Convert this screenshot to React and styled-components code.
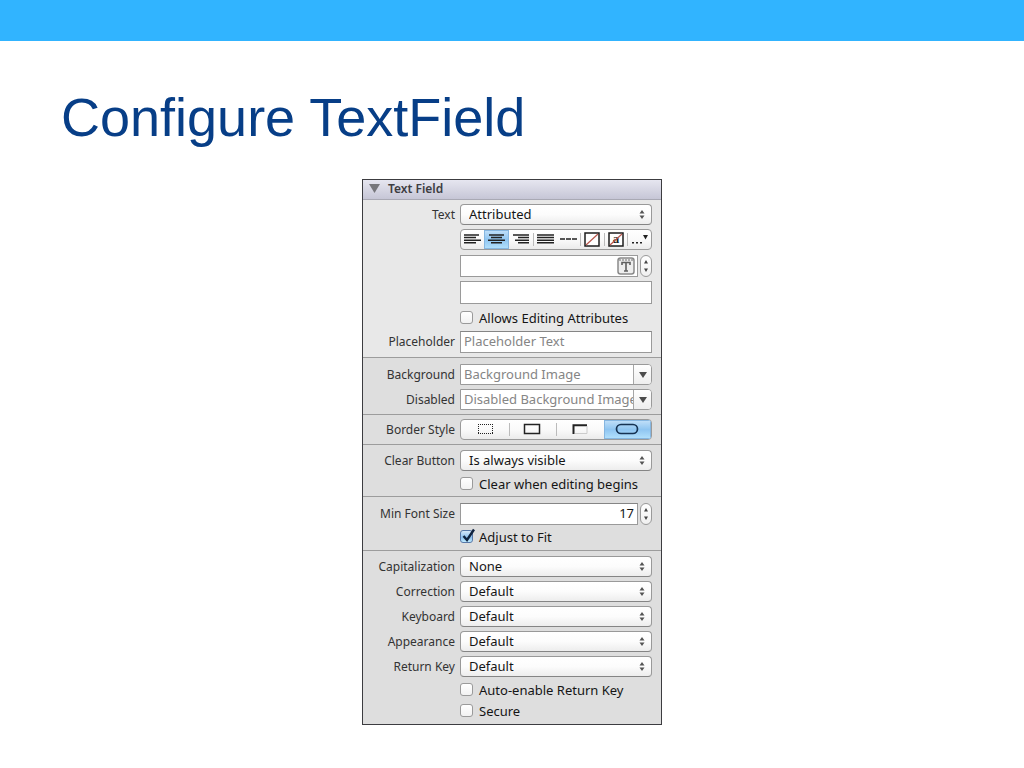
import React from "react";
import styled, { createGlobalStyle, css } from "styled-components";

const GlobalStyle = createGlobalStyle`
  * { box-sizing: border-box; }
  body { margin: 0; background: #fff; }
  button, input, select, textarea { font: inherit; margin: 0; }
`;

const Slide = styled.div`
  display: flex;
  flex-direction: column;
  font-family: "Noto Sans", "Open Sans", sans-serif;
`;

const Banner = styled.div`
  height: 41px;
  background: #31b4ff;
`;

const Title = styled.h1`
  margin: 0;
  padding: 46px 61px 32px;
  font: 400 54px/60px "Liberation Sans", sans-serif;
  color: #073e87;
`;

const Panel = styled.form`
  width: 300px;
  margin: 0 auto;
  border: 1px solid #3c3c40;
  background: #dedede;
  font-size: 13px;
  line-height: 18px;
  color: #151515;
`;

const PanelHeader = styled.h2`
  display: flex;
  align-items: center;
  gap: 8px;
  height: 20px;
  margin: 0;
  padding: 0 6px 2px;
  border-bottom: 1px solid #a9a9b4;
  background: linear-gradient(#e6e6f0, #c6c6d6);
  font-size: 12px;
  line-height: 16px;
  font-weight: 600;
  color: #3d3d42;
`;

const Section = styled.section`
  padding: ${(p) => p.$pad || "3px 0"};
  background: ${(p) => (p.$light ? "#e8e8e8" : "#dedede")};
  & + & { border-top: 1px solid #9c9c9c; }
`;

const rowHeights = { tall: 27, normal: 25, medium: 23, short: 21 };

const Row = styled.div`
  display: grid;
  grid-template-columns: 92px 192px;
  column-gap: 5px;
  align-items: center;
  height: ${(p) => rowHeights[p.$size || "normal"]}px;
`;

const Label = styled.label`
  text-align: right;
  white-space: nowrap;
  font-size: 12px;
  color: #333;
`;

const Control = styled.div`
  grid-column: 2;
  display: flex;
  align-items: center;
  gap: ${(p) => p.$gap || 0}px;
`;

const box = css`
  border: 1px solid #9a9a9a;
  background: #fff;
`;

const PopupWrap = styled.div`
  position: relative;
  width: 100%;
  height: 21px;
  svg {
    position: absolute;
    right: 7px;
    top: 6px;
    pointer-events: none;
  }
`;

const Popup = styled.select`
  ${box}
  display: block;
  appearance: none;
  width: 100%;
  height: 21px;
  padding: 0 8px 2px;
  border-radius: 4px;
  border-color: #999 #999 #858585;
  background: linear-gradient(#fff, #fcfcfc 50%, #ededed);
  color: inherit;
  line-height: 18px;
`;

const Field = styled.input`
  ${box}
  flex: 1;
  min-width: 0;
  width: 100%;
  height: 22px;
  padding: 0 3px 2px;
  border-top-color: #858585;
  color: inherit;
  text-align: ${(p) => (p.$right ? "right" : "left")};
  &::placeholder { color: #858585; opacity: 1; }
`;

const FontField = styled.div`
  ${box}
  flex: 1;
  min-width: 0;
  display: flex;
  align-items: center;
  height: 22px;
  padding-right: 2px;
`;

const BareInput = styled.input`
  flex: 1;
  min-width: 0;
  border: 0;
  padding: 0 4px;
  background: none;
`;

const IconButton = styled.button`
  display: flex;
  padding: 0;
  border: 0;
  background: none;
`;

const TextArea = styled.textarea`
  ${box}
  display: block;
  width: 100%;
  height: 23px;
  padding: 1px 4px;
  resize: none;
  overflow: hidden;
`;

const StepperButton = styled.button`
  ${box}
  flex: none;
  display: flex;
  align-items: center;
  justify-content: center;
  width: 12px;
  height: 22px;
  padding: 0;
  border-radius: 6px;
  background: linear-gradient(#fff, #f0f0f0);
`;

const Combo = styled.div`
  ${box}
  display: flex;
  width: 100%;
  height: 21px;
  border-radius: 0 4px 4px 0;
  overflow: hidden;
`;

const ComboInput = styled(BareInput)`
  padding: 0 0 2px 3px;
  &::placeholder { color: #858585; opacity: 1; }
`;

const ComboButton = styled.button`
  display: flex;
  align-items: center;
  justify-content: center;
  width: 18px;
  padding: 0;
  border: 0;
  border-left: 1px solid #a6a6a6;
  background: linear-gradient(#fff, #eee);
`;

const Segments = styled.div`
  ${box}
  display: grid;
  grid-template-columns: ${(p) => p.$columns};
  width: 100%;
  height: 21px;
  border-radius: 4px;
  background: linear-gradient(#fff, #fafafa 50%, #ebebeb);
  overflow: hidden;
`;

const Segment = styled.button`
  display: flex;
  align-items: center;
  justify-content: center;
  padding: 0 0 1px;
  border: 0;
  background: ${(p) => (p.$on ? "linear-gradient(#c4e1f9, #8fc5f1 50%, #b4e2fd)" : "none")};
  ${(p) => p.$on && "box-shadow: inset 0 0 0 1px #86b6e0;"}
  ${(p) => p.$rule && "background: linear-gradient(#bbb, #bbb) 0 50% / 1px 13px no-repeat;"}
`;

const CheckLabel = styled.label`
  display: flex;
  align-items: center;
  gap: 6px;
  position: relative;
  white-space: nowrap;
  svg {
    position: absolute;
    left: 1px;
    top: 0;
    pointer-events: none;
    display: none;
  }
  input:checked + svg { display: block; }
`;

const CheckInput = styled.input`
  ${box}
  appearance: none;
  width: 13px;
  height: 13px;
  border-radius: 3px;
  background: linear-gradient(#fff, #f2f2f2);
  &:checked {
    border-color: #5778a8;
    background: linear-gradient(#d5e8fa, #8cc0f0 60%, #c0ecff);
  }
`;

const UpDown = () => (
  <svg width="6" height="9" viewBox="0 0 6 9" fill="#555" aria-hidden="true">
    <path d="M3 0 5.5 3.4H.5zM3 9 .5 5.6h5z" />
  </svg>
);

const StepArrows = () => (
  <svg width="6" height="14" viewBox="0 0 6 14" fill="#444" aria-hidden="true">
    <path d="M3 1 5 4.4H1zM3 13 1 9.6h4z" />
  </svg>
);

const Down = ({ w = 8, h = 6, fill = "#4c4c4c" }) => (
  <svg width={w} height={h} viewBox="0 0 9 7" preserveAspectRatio="none" fill={fill} aria-hidden="true">
    <path d="M0 0h9L4.500 7z" />
  </svg>
);

const Lines = ({ rows }) => (
  <svg width="17" height="10" viewBox="0 0 17 10" stroke="#222" strokeWidth="1.5" aria-hidden="true">
    {rows.map(([a, b], i) => (
      <path key={i} d={`M${a} ${1 + i * 2.6}H${b}`} />
    ))}
  </svg>
);

const alignments = [
  ["Align left", [[0, 15], [0, 12], [0, 17], [0, 12]]],
  ["Align center", [[1, 16], [3, 14], [0, 17], [3, 14]]],
  ["Align right", [[0, 16], [5, 16], [2, 16], [5, 16]]],
  ["Justify", [[0, 17], [0, 17], [0, 17], [0, 17]]],
];

const Dashes = () => (
  <svg width="17" height="4" viewBox="0 0 17 4" aria-hidden="true">
    <path d="M0 2h17" stroke="#222" strokeWidth="1.500" strokeDasharray="5 1" />
  </svg>
);

const Swatch = ({ letter }) => (
  <svg width="16" height="15" viewBox="0 0 16 15" aria-hidden="true">
    <rect x="1" y="1" width="14" height="13" fill="#fff" stroke="#1c1c1c" strokeWidth="1.500" />
    {letter && (
      <text x="8" y="11" textAnchor="middle" fontFamily="Liberation Serif, serif" fontWeight="700" fontSize="13" fill="#222">a</text>
    )}
    <path d="M2 13 14 2" stroke="#b8564c" strokeWidth="1.200" />
  </svg>
);

const More = () => (
  <svg width="17" height="12" viewBox="0 0 17 12" fill="#222" aria-hidden="true">
    <path d="M1 9h2v1.500H1zM5 9h2v1.500H5zM9 9h2v1.500H9zM12 2h5L14.500 6.500z" />
  </svg>
);

const FontIcon = () => (
  <svg width="18" height="18" viewBox="0 0 18 18" aria-hidden="true">
    <rect x="1" y="1" width="16" height="16" rx="2.500" fill="#eee" stroke="#8a8a8a" strokeWidth="1.500" />
    <path d="M2 3h14" stroke="#999" strokeWidth="1.500" strokeDasharray="2 1" />
    <path d="M5 8V5.500h8V8M9 5.500V14M7 14h4" fill="none" stroke="#606060" strokeWidth="1.600" />
  </svg>
);

const BorderIcon = ({ kind }) => (
  <svg width="24" height="12" viewBox="0 0 24 12" fill="none" stroke="#222" aria-hidden="true">
    {kind === "None" && <path d="M5 1.500H20M5 10.500H20M5.500 1V11M19.500 1V11" strokeDasharray="1 1" shapeRendering="crispEdges" />}
    {kind === "Line" && <rect x="4.500" y="1.500" width="15" height="9" strokeWidth="1.500" />}
    {kind === "Bezel" && (
      <>
        <path d="M5.500 11V2.200H19" strokeWidth="2" />
        <path d="M19 3v7.500H7" stroke="#ccc" />
      </>
    )}
    {kind === "Rounded" && <rect x="1.500" y="1.500" width="21" height="9" rx="4.500" stroke="#163252" strokeWidth="1.700" />}
  </svg>
);

const PopupRow = ({ id, label, value }) => (
  <Row>
    <Label htmlFor={id}>{label}</Label>
    <PopupWrap>
      <Popup id={id}>
        <option>{value}</option>
      </Popup>
      <UpDown />
    </PopupWrap>
  </Row>
);

const ComboRow = ({ id, label, placeholder }) => (
  <Row>
    <Label htmlFor={id}>{label}</Label>
    <Combo>
      <ComboInput id={id} placeholder={placeholder} />
      <ComboButton type="button" aria-label={`Choose ${label}`}>
        <Down />
      </ComboButton>
    </Combo>
  </Row>
);

const CheckRow = ({ label, checked, size = "short" }) => (
  <Row $size={size}>
    <Control>
      <CheckLabel>
        <CheckInput type="checkbox" defaultChecked={checked} />
        <svg width="15" height="15" viewBox="0 0 15 15" aria-hidden="true">
          <path d="M2.500 8 6 12 13 1.500" fill="none" stroke="#10233f" strokeWidth="2.400" />
        </svg>
        {label}
      </CheckLabel>
    </Control>
  </Row>
);

const Stepper = ({ label }) => (
  <StepperButton type="button" aria-label={label}>
    <StepArrows />
  </StepperButton>
);

export default function App() {
  return (
    <>
      <GlobalStyle />
      <Slide>
        <Banner />
        <Title>Configure TextField</Title>
        <Panel>
          <PanelHeader>
            <Down w={11} h={9} fill="#77777c" />
            Text Field
          </PanelHeader>

          <Section $light $pad="2px 0 3px">
            <PopupRow id="text" label="Text" value="Attributed" />
            <Row>
              <Control>
                <Segments $columns="23px 25px 24px 24px 23px 24px 23px 24px">
                  {alignments.map(([name, rows], i) => (
                    <Segment type="button" key={name} aria-label={name} $on={i === 1} $rule={i === 3}>
                      <Lines rows={rows} />
                    </Segment>
                  ))}
                  <Segment type="button" aria-label="Natural alignment"><Dashes /></Segment>
                  <Segment type="button" aria-label="Text color" $rule><Swatch /></Segment>
                  <Segment type="button" aria-label="Highlight color" $rule><Swatch letter /></Segment>
                  <Segment type="button" aria-label="More" $rule><More /></Segment>
                </Segments>
              </Control>
            </Row>
            <Row $size="tall">
              <Control $gap={2}>
                <FontField>
                  <BareInput aria-label="Font" />
                  <IconButton type="button" aria-label="Choose font"><FontIcon /></IconButton>
                </FontField>
                <Stepper label="Font size" />
              </Control>
            </Row>
            <Row $size="tall">
              <Control>
                <TextArea aria-label="Attributed text" />
              </Control>
            </Row>
            <CheckRow label="Allows Editing Attributes" size="medium" />
            <Row>
              <Label htmlFor="placeholder">Placeholder</Label>
              <Field id="placeholder" placeholder="Placeholder Text" />
            </Row>
          </Section>

          <Section $pad="4px 0 2px">
            <ComboRow id="background" label="Background" placeholder="Background Image" />
            <ComboRow id="disabled" label="Disabled" placeholder="Disabled Background Image" />
          </Section>

          <Section $pad="2px 0">
            <Row>
              <Label as="span">Border Style</Label>
              <Segments $columns="repeat(4, 1fr)" role="group" aria-label="Border Style">
                {["None", "Line", "Bezel", "Rounded"].map((kind, i) => (
                  <Segment type="button" key={kind} aria-label={kind} $on={i === 3} $rule={i === 1 || i === 2}>
                    <BorderIcon kind={kind} />
                  </Segment>
                ))}
              </Segments>
            </Row>
          </Section>

          <Section $pad="3px 0 2px">
            <PopupRow id="clear" label="Clear Button" value="Is always visible" />
            <CheckRow label="Clear when editing begins" />
          </Section>

          <Section $pad="4px 0 3px">
            <Row>
              <Label htmlFor="min-size">Min Font Size</Label>
              <Control $gap={2}>
                <Field id="min-size" defaultValue="17" $right />
                <Stepper label="Change minimum font size" />
              </Control>
            </Row>
            <CheckRow label="Adjust to Fit" checked />
          </Section>

          <Section $pad="3px 0">
            <PopupRow id="capitalization" label="Capitalization" value="None" />
            <PopupRow id="correction" label="Correction" value="Default" />
            <PopupRow id="keyboard" label="Keyboard" value="Default" />
            <PopupRow id="appearance" label="Appearance" value="Default" />
            <PopupRow id="return-key" label="Return Key" value="Default" />
            <CheckRow label="Auto-enable Return Key" />
            <CheckRow label="Secure" />
          </Section>
        </Panel>
      </Slide>
    </>
  );
}
